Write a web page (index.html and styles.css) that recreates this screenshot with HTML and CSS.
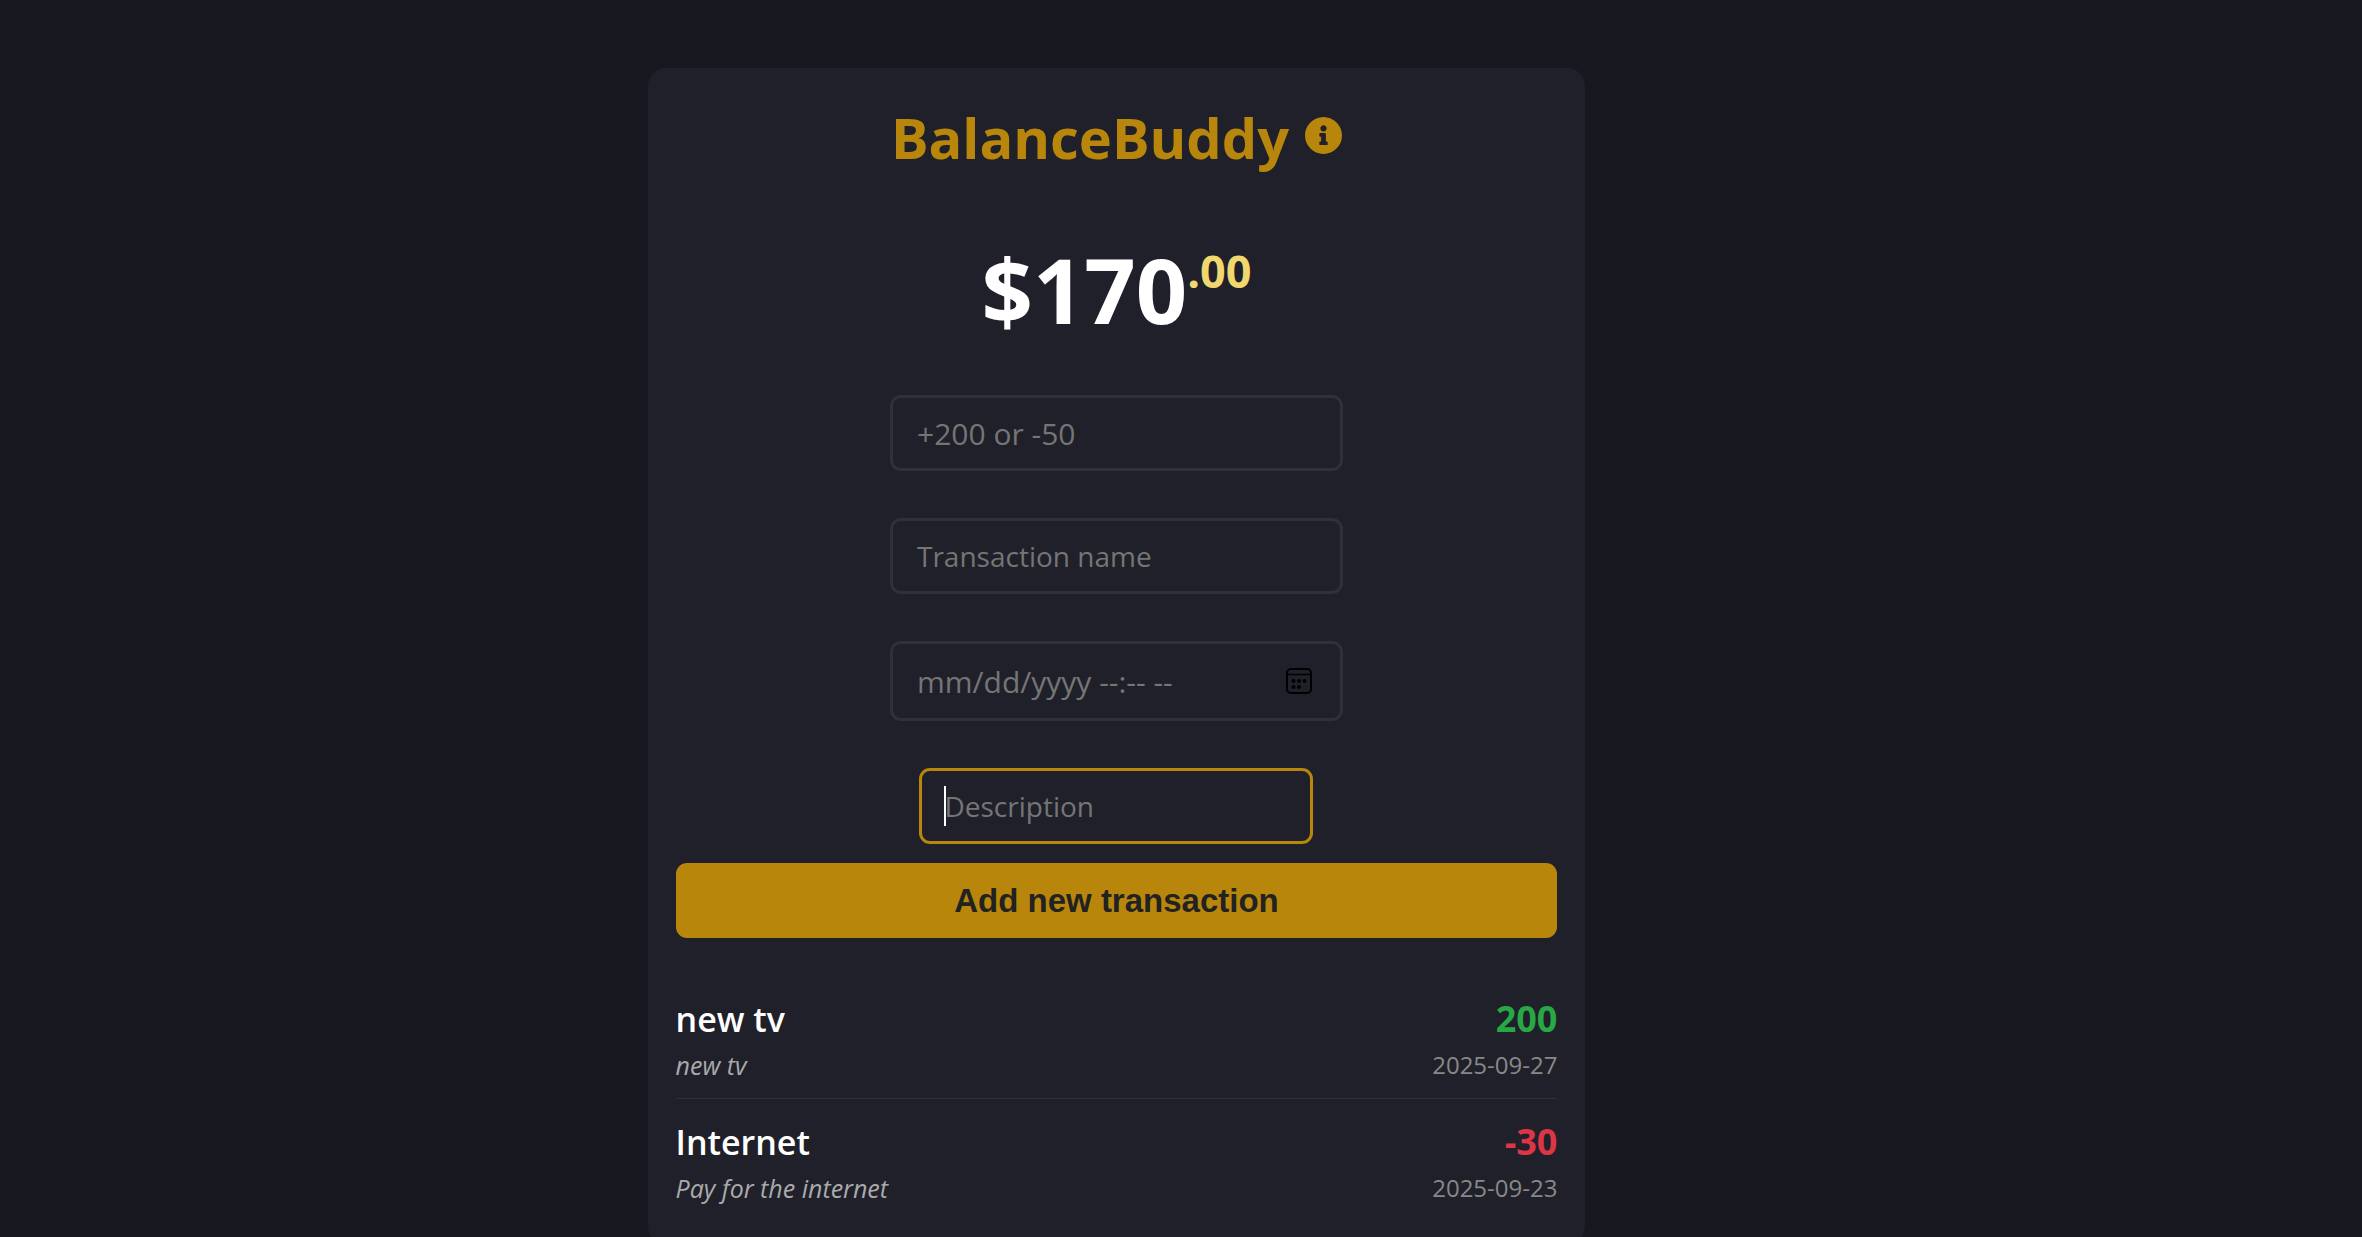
FILE: index.html
```html
<!DOCTYPE html>
<html lang="en">
<head>
<meta charset="utf-8">
<meta name="viewport" content="width=device-width, initial-scale=1">
<title>BalanceBuddy</title>
<link rel="stylesheet" href="styles.css">
</head>
<body>
<main class="card">
  <header class="header">
    <h1 class="title">BalanceBuddy</h1>
    <button class="info" type="button" aria-label="About BalanceBuddy">
      <svg viewBox="8 8 496 496" aria-hidden="true"><path fill="currentColor" d="M256 8C119 8 8 119 8 256s111 248 248 248 248-111 248-248S393 8 256 8zm0 110c23.200 0 42 18.800 42 42s-18.800 42-42 42-42-18.800-42-42 18.800-42 42-42zm56 254c0 6.600-5.400 12-12 12h-88c-6.600 0-12-5.400-12-12v-24c0-6.600 5.400-12 12-12h12v-64h-12c-6.600 0-12-5.400-12-12v-24c0-6.600 5.400-12 12-12h64c6.600 0 12 5.400 12 12v100h12c6.600 0 12 5.400 12 12v24z"/></svg>
    </button>
  </header>
  <h2 class="balance">$170<span class="cents">.00</span></h2>
  <form class="form">
    <div class="field field-numeric"><input type="text" placeholder="+200 or -50" aria-label="Amount"></div>
    <div class="field"><input type="text" placeholder="Transaction name" aria-label="Transaction name"></div>
    <div class="field field-numeric field-date">
      <input type="text" placeholder="mm/dd/yyyy --:-- --" aria-label="Date and time">
      <button class="picker" type="button" aria-label="Show date picker">
        <svg viewBox="0 0 26 26" aria-hidden="true">
          <rect x="1" y="1" width="24" height="24" rx="4" fill="none" stroke="currentColor" stroke-width="2"/>
          <path d="M1 6.500h24" stroke="currentColor" stroke-width="1.500"/>
          <g fill="currentColor"><circle cx="7.500" cy="13" r="2"/><circle cx="13" cy="13" r="2"/><circle cx="18.500" cy="13" r="2"/><circle cx="7.500" cy="19" r="2"/><circle cx="13" cy="19" r="2"/></g>
        </svg>
      </button>
    </div>
    <div class="field field-description">
      <input type="text" placeholder="Description" aria-label="Description" autofocus>
      <span class="caret"></span>
    </div>
    <button class="submit" type="submit">Add new transaction</button>
  </form>
  <ul class="transactions">
    <li class="transaction">
      <div>
        <div class="name">new tv</div>
        <div class="description">new tv</div>
      </div>
      <div class="right">
        <div class="price income">200</div>
        <time class="date" datetime="2025-09-27">2025-09-27</time>
      </div>
    </li>
    <li class="transaction">
      <div>
        <div class="name">Internet</div>
        <div class="description">Pay for the internet</div>
      </div>
      <div class="right">
        <div class="price expense">-30</div>
        <time class="date" datetime="2025-09-23">2025-09-23</time>
      </div>
    </li>
  </ul>
</main>
</body>
</html>
```
FILE: styles.css
```css
* {
  box-sizing: border-box;
}

body {
  margin: 0;
  padding: 68px 129px 0 0;
  background: #171720;
  color: #fff;
  font-family: "Segoe UI", "Open Sans", "Noto Sans", sans-serif;
}

.card {
  width: 42%;
  min-width: 600px;
  margin: 0 auto;
  padding: 25px 28px 22px;
  border-radius: 18px;
  background: #20202a;
}

.header {
  display: flex;
  justify-content: center;
  align-items: center;
  gap: 16px;
}

.title {
  margin: 0;
  color: #b8860b;
  font-size: 56px;
  font-weight: 700;
  line-height: 88px;
}

.info {
  width: 37px;
  height: 37px;
  margin-bottom: 4px;
  padding: 0;
  border: 0;
  background: none;
  color: #b8860b;
}

.info svg,
.picker svg {
  display: block;
  width: 100%;
  height: 100%;
}

.balance {
  display: flex;
  justify-content: center;
  align-items: flex-start;
  margin: 50px 0 48px;
  font-size: 90px;
  font-weight: 700;
  line-height: 116px;
}

.cents {
  color: #f0d86e;
  font-size: 45px;
  line-height: 80px;
}

.form {
  display: flex;
  flex-direction: column;
  align-items: center;
  gap: 47px;
}

.field {
  position: relative;
  display: flex;
  align-items: center;
  width: 453px;
  max-width: 100%;
  height: 76px;
  padding: 0 24px;
  border: 3px solid #30303d;
  border-radius: 11px;
}

.field input {
  flex: 1;
  min-width: 0;
  padding: 0;
  border: 0;
  outline: none;
  background: transparent;
  color: #fff;
  font-family: inherit;
  font-size: 28px;
}

.field input::placeholder {
  color: #757575;
}

.field-numeric input {
  font-size: 30px;
}

.field-date {
  height: 80px;
  padding-right: 28px;
}

.picker {
  width: 26px;
  height: 26px;
  padding: 0;
  border: 0;
  background: none;
  color: #000;
}

.field-description {
  width: 394px;
  padding: 0 22px;
}

.field-description:focus-within {
  border-color: #b8860b;
}

.field-description input {
  caret-color: transparent;
}

.caret {
  position: absolute;
  top: 15px;
  left: 22px;
  width: 2px;
  height: 40px;
  background: #fff;
}

.submit {
  width: 100%;
  height: 75px;
  margin-top: -28px;
  border: 0;
  border-radius: 11px;
  background: #b8860b;
  color: #222;
  font-family: Arial, "Liberation Sans", sans-serif;
  font-size: 33px;
  font-weight: 700;
}

.transactions {
  margin: 38px 0 0;
  padding: 0;
  list-style: none;
}

.transaction {
  display: flex;
  justify-content: space-between;
  height: 123px;
  padding-top: 18px;
}

.transaction:not(:last-child) {
  border-bottom: 1px solid #30303d;
}

.name,
.price {
  font-size: 36px;
  line-height: 50px;
}

.name {
  font-size: 34px;
  font-weight: 600;
}

.price {
  font-weight: 700;
}

.right {
  text-align: right;
}

.description,
.date {
  display: block;
  font-size: 24px;
  line-height: 42px;
}

.description {
  color: #aaa;
  font-size: 25px;
  font-style: italic;
}

.date {
  color: #888;
}

.income {
  color: #28a745;
}

.expense {
  color: #dc3545;
}
```
